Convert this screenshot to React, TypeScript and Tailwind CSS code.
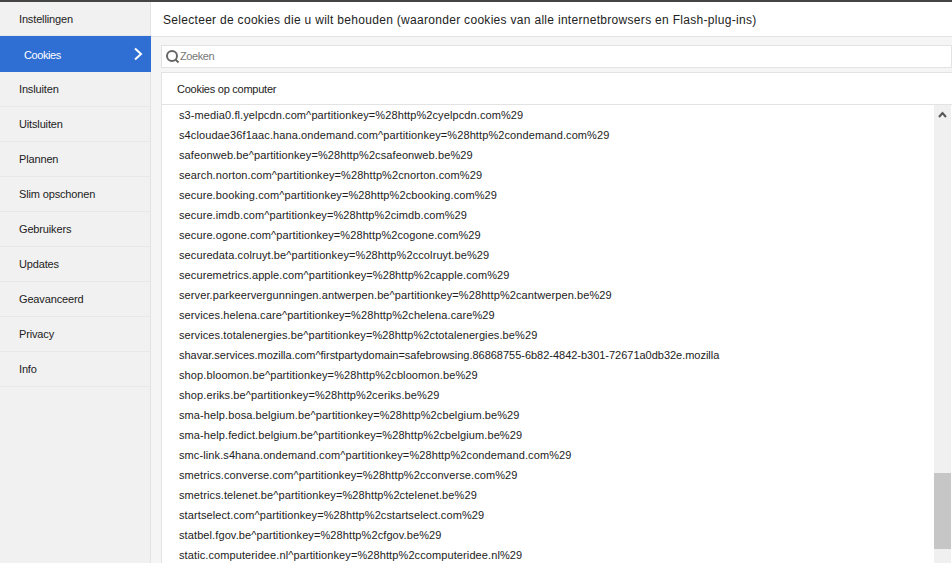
const nav = ["Instellingen","Cookies","Insluiten","Uitsluiten","Plannen","Slim opschonen","Gebruikers","Updates","Geavanceerd","Privacy","Info"];
const rows = [
"s3-media0.fl.yelpcdn.com^partitionkey=%28http%2cyelpcdn.com%29",
"s4cloudae36f1aac.hana.ondemand.com^partitionkey=%28http%2condemand.com%29",
"safeonweb.be^partitionkey=%28http%2csafeonweb.be%29",
"search.norton.com^partitionkey=%28http%2cnorton.com%29",
"secure.booking.com^partitionkey=%28http%2cbooking.com%29",
"secure.imdb.com^partitionkey=%28http%2cimdb.com%29",
"secure.ogone.com^partitionkey=%28http%2cogone.com%29",
"securedata.colruyt.be^partitionkey=%28http%2ccolruyt.be%29",
"securemetrics.apple.com^partitionkey=%28http%2capple.com%29",
"server.parkeervergunningen.antwerpen.be^partitionkey=%28http%2cantwerpen.be%29",
"services.helena.care^partitionkey=%28http%2chelena.care%29",
"services.totalenergies.be^partitionkey=%28http%2ctotalenergies.be%29",
"shavar.services.mozilla.com^firstpartydomain=safebrowsing.86868755-6b82-4842-b301-72671a0db32e.mozilla",
"shop.bloomon.be^partitionkey=%28http%2cbloomon.be%29",
"shop.eriks.be^partitionkey=%28http%2ceriks.be%29",
"sma-help.bosa.belgium.be^partitionkey=%28http%2cbelgium.be%29",
"sma-help.fedict.belgium.be^partitionkey=%28http%2cbelgium.be%29",
"smc-link.s4hana.ondemand.com^partitionkey=%28http%2condemand.com%29",
"smetrics.converse.com^partitionkey=%28http%2cconverse.com%29",
"smetrics.telenet.be^partitionkey=%28http%2ctelenet.be%29",
"startselect.com^partitionkey=%28http%2cstartselect.com%29",
"statbel.fgov.be^partitionkey=%28http%2cfgov.be%29",
"static.computeridee.nl^partitionkey=%28http%2ccomputeridee.nl%29",
];
export default function App() {
  return (
    <div className="w-[952px] h-[563px] overflow-hidden flex flex-col bg-white text-[11px] text-[#222] font-['Liberation_Sans',Arial,sans-serif]">
      <div className="h-[2px] bg-[#444444] shrink-0" />
      <div className="flex flex-1 min-h-0">
        <div className="w-[151px] shrink-0 bg-[#f1f1f1] border-r border-[#e3e3e3] tracking-[-0.15px]">
          {nav.map((n) =>
            n === "Cookies" ? (
              <div key={n} className="h-[36px] -mr-px bg-[#2f6fd4] text-white flex items-center justify-between pl-[24px] pr-[8px]">
                <span className="pt-[2px] tracking-[-0.4px]">{n}</span>
                <svg width="10" height="14" viewBox="0 0 10 14" fill="none" stroke="#fff" strokeWidth="2"><path d="M2 1.5 8 7 2 12.5" /></svg>
              </div>
            ) : (
              <div key={n} className={`${n === "Instellingen" ? "h-[34px] pt-[1px]" : "h-[35px]"} flex items-center pl-[19px] border-b border-[#e8e8e8]`}>{n}</div>
            )
          )}
        </div>
        <div className="flex-1 min-w-0 flex flex-col">
          <div className="h-[35px] shrink-0 flex items-center pl-[12px] pt-[1px] border-b border-[#e3e3e3] text-[12px] tracking-[0.3px]">
            Selecteer de cookies die u wilt behouden (waaronder cookies van alle internetbrowsers en Flash-plug-ins)
          </div>
          <div className="flex-1 min-h-0 flex flex-col bg-[#f5f5f5] pt-[8px] pl-[10px]">
            <div className="h-[23px] shrink-0 bg-white border border-[#e3e3e3] flex items-center pl-[3px] text-[#777]">
              <svg width="15" height="15" viewBox="0 0 15 15" fill="none" stroke="#666" strokeWidth="2"><circle cx="7" cy="7" r="5" /><path d="M10.5 10.5 13.5 13.5" /></svg>
              <span className="tracking-[-0.4px]">Zoeken</span>
            </div>
            <div className="flex-1 min-h-0 mt-[4px] bg-white border-l border-t border-[#e3e3e3] flex flex-col">
              <div className="h-[32px] shrink-0 flex items-center pl-[15px] pt-[2px] border-b border-[#e3e3e3] tracking-[-0.25px]">Cookies op computer</div>
              <div className="flex-1 min-h-0 flex">
                <div className="flex-1 min-w-0 pl-[17px]">
                  {rows.map((r) => <div key={r} className={`h-[20px] flex items-center whitespace-nowrap ${r.startsWith("shavar") ? "tracking-[-0.02px]" : "tracking-[0.1px]"}`}>{r}</div>)}
                </div>
                <div className="w-[17px] mr-px shrink-0 bg-[#f0f0f0] flex flex-col items-center">
                  <svg className="mt-[6px]" width="9" height="7" viewBox="0 0 9 7" fill="none" stroke="#555" strokeWidth="2"><path d="M1 6 4.5 2 8 6" /></svg>
                  <div className="mt-[355px] w-full h-[76px] bg-[#c6c6c6]" />
                </div>
              </div>
            </div>
          </div>
        </div>
      </div>
    </div>
  );
}
